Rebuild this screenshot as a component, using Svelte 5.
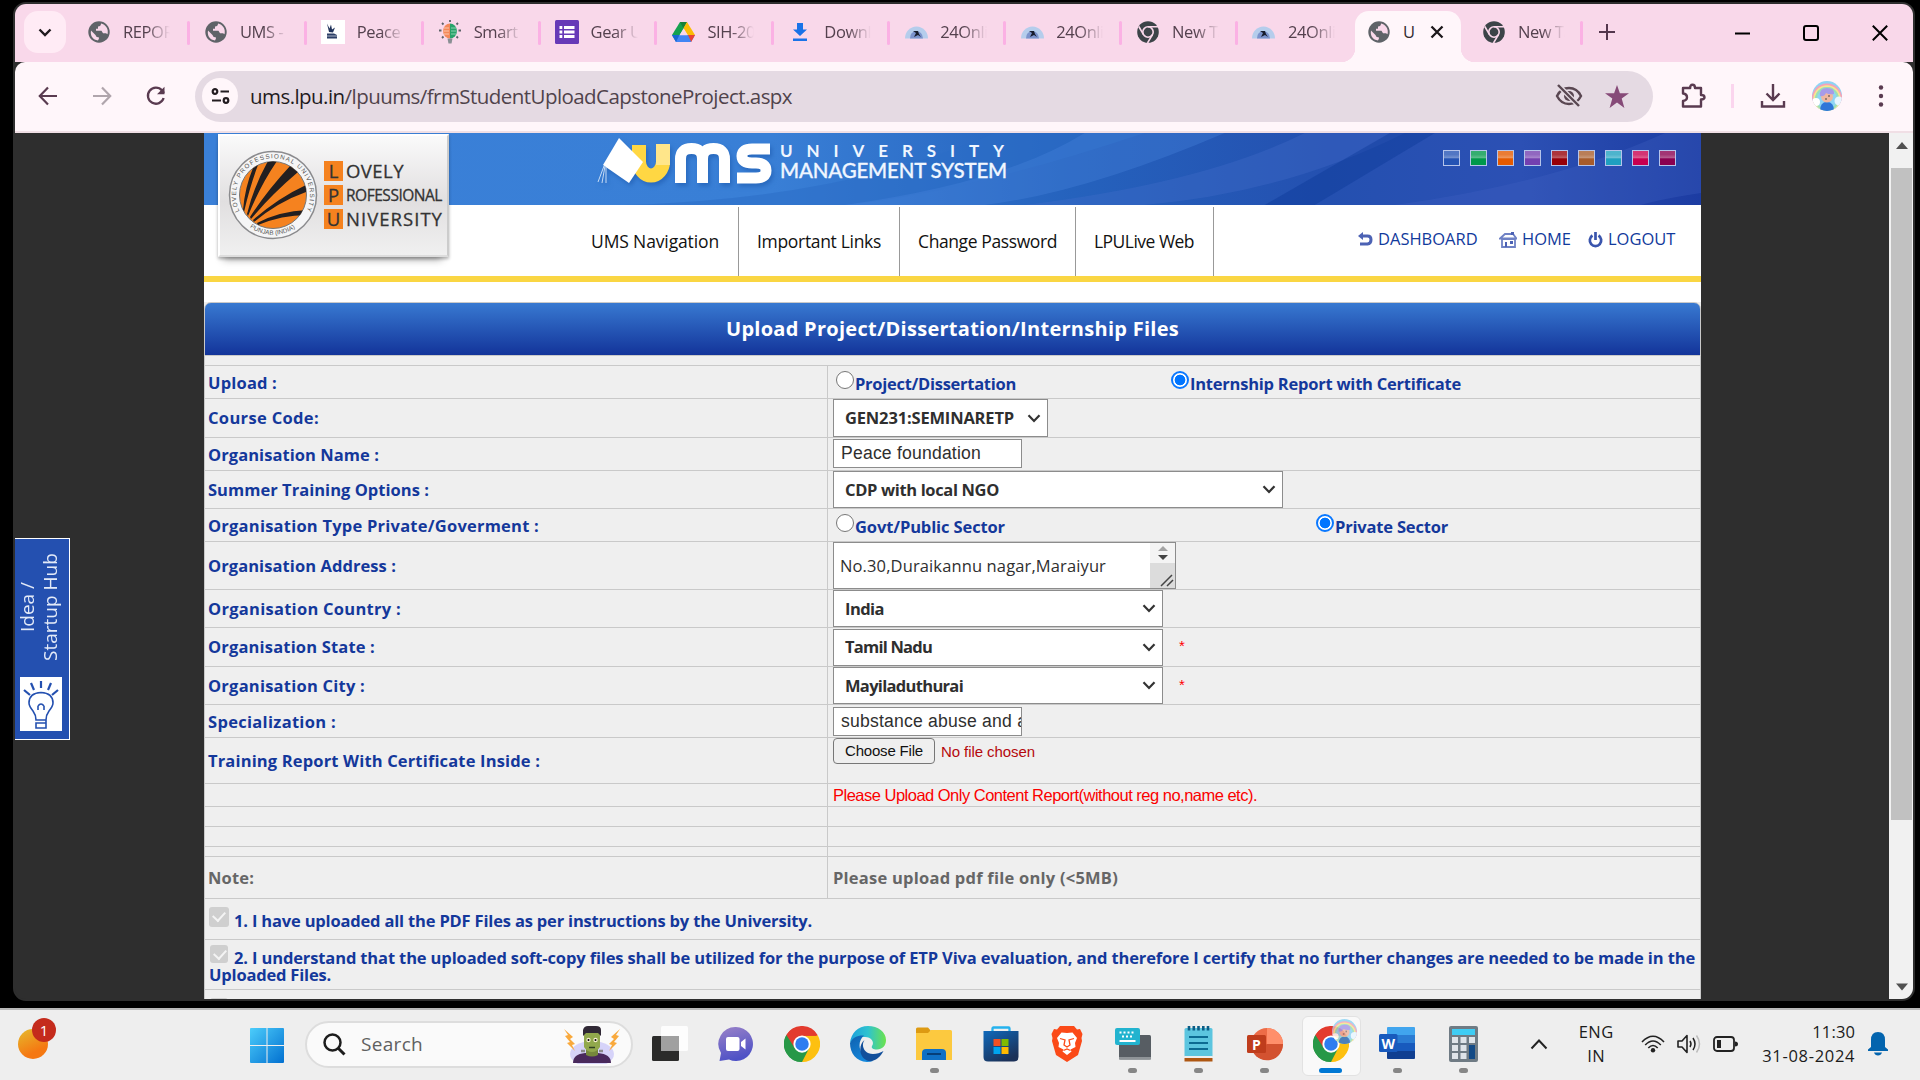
<script>
  const tabs = [
    ['globe', 'REPOR'], ['globe', 'UMS - L'], ['peace', 'Peace F'], ['smart', 'Smart I'],
    ['list', 'Gear Up'], ['drive', 'SIH-202'], ['down', 'Downlo'], ['dome', '24Onli'],
    ['dome', '24Onli'], ['chromeDark', 'New Ta'], ['dome', '24Onli']
  ];
  const nav = [['UMS Navigation', 128], ['Important Links', 124], ['Change Password', 139], ['LPULive Web', 100]];
  const swatches = ['#2453b4', '#00984a', '#e55a00', '#7440b0', '#970008', '#a75c2c', '#1fa0c0', '#c9004f', '#8a0050'];
  const apps = [
    ['taskview', 0], ['chat', 0], ['chrome', 0], ['edge', 0], ['folder', 1], ['store', 0], ['brave', 0],
    ['keyboard', 1], ['notepad', 1], ['ppt', 1], ['chromeUser', 2], ['word', 1], ['calc', 1]
  ];

  // Spreads a text line over a given width by adjusting its tracking.
  function fit(node, width) {
    requestAnimationFrame(() => {
      const natural = node.getBoundingClientRect().width;
      node.style.letterSpacing = (width - natural) / node.textContent.length + 'px';
    });
  }
</script>

{#snippet chevron()}
  <svg class="chev" width="14" height="9" viewBox="0 0 14 9"><path d="M1.500 1.200 7 7l5.500-5.800" fill="none" stroke="#333" stroke-width="2.200" /></svg>
{/snippet}

{#snippet select(text, w, cls)}
  <div class="select {cls}"><b class="tb" use:fit={w}>{text}</b>{@render chevron()}</div>
{/snippet}

{#snippet radio(on, text, w, cls)}
  <div class="radio {cls}"><i class:on></i><b class="tb blue" use:fit={w}>{text}</b></div>
{/snippet}

{#snippet chromeLogo(size)}
  <svg width={size} height={size} viewBox="0 0 48 48">
    <path d="M24 24 3.200 12A24 24 0 0 1 44.800 12z" fill="#e33b2e" />
    <path d="M24 24 44.800 12A24 24 0 0 1 24 48z" fill="#fdc010" />
    <path d="M24 24v24A24 24 0 0 1 3.200 12z" fill="#279847" />
    <path d="M24 13h20.300A24 24 0 0 1 24 48l9.500-18.500z" fill="#fdc010" />
    <path d="M3.200 12 14.500 29.500 24 35l9.500-5.500L24 48A24 24 0 0 1 3.200 12z" fill="#279847" />
    <path d="M3.200 12A24 24 0 0 1 44.300 13H24L14.500 29.500z" fill="#e33b2e" />
    <circle cx="24" cy="24" r="11.500" fill="#fff" /><circle cx="24" cy="24" r="9" fill="#2f7df0" />
  </svg>
{/snippet}

{#snippet avatar(size)}
  <svg width={size} height={size} viewBox="0 0 30 30">
    <defs><clipPath id="av{size}"><circle cx="15" cy="15" r="15" /></clipPath></defs>
    <g clip-path="url(#av{size})">
      <rect width="30" height="30" fill="#8fd4f4" />
      <g fill="none" stroke-width="1.800"><circle cx="15" cy="18" r="14.500" stroke="#f7a1b8" /><circle cx="15" cy="18" r="12.800" stroke="#fbe58a" /><circle cx="15" cy="18" r="11" stroke="#9be0b4" /></g>
      <circle cx="4" cy="21" r="4" fill="#fff" /><circle cx="27" cy="20" r="4.500" fill="#e8f6ff" />
      <path d="M8 30q0-9 7-9t7 9z" fill="#2f76d8" />
      <circle cx="15" cy="15.500" r="6" fill="#f0b7a0" />
      <path d="M8 15q-1-8 7-8t7 6q-5 1-8-1-2 4-6 3z" fill="#a79be8" />
      <path d="M17 14v2M13 18h2" stroke="#444" />
    </g>
  </svg>
{/snippet}

{#snippet favicon(kind)}
  {#if kind === 'globe'}
    <svg width="22" height="22" viewBox="0 0 22 22"><circle cx="11" cy="11" r="10.700" fill="#5f6368" /><path d="M3 9.500 7.500 14c.7.700 0 1.500 1.500 2l2 .5c0 1.500-.5 2-1 3C5 18.800 2 15 3 9.500zM13 2.500c0 2-1 3-3 3v2.200H8v2h5.500l1.500 2.500h3l1.500 1C21 8 17.500 3.500 13 2.500z" fill="#f9d8ea" /></svg>
  {:else if kind === 'peace'}
    <svg width="24" height="24" viewBox="0 0 24 24"><rect width="24" height="24" fill="#fff" /><path d="M6 3.500 8 12l4 .5 2-5-3 2-1-5-1.500 4z" fill="#22345c" /><path d="M6 13.500h7l3 1.500v3.500H6z" fill="#2c3e66" /><path d="M6 16h10" stroke="#cdd3df" stroke-width=".8" /></svg>
  {:else if kind === 'smart'}
    <svg width="22" height="24" viewBox="0 0 22 24"><path d="M11 3.500a7 7.500 0 0 0 0 15z" fill="#f4895a" /><path d="M11 3.500a7 7.500 0 0 1 0 15z" fill="#27a36a" /><path d="M5 8h5M4.500 11h5.500M5 14h5" stroke="#fbc5ac" /><path d="M12 8h5M12 11h5.500M12 14h5" stroke="#8bd1ae" /><path d="M8.500 18.500h5l-1 5h-3z" fill="#8a8f94" /><path d="M11 0v2M3 3l1.500 1.500M19 3l-1.500 1.500M0 10.500h2.500M19.500 10.500H22M3 18l1.500-1.500M19 18l-1.500-1.500" stroke="#5c6268" stroke-width="1.800" /></svg>
  {:else if kind === 'list'}
    <svg width="24" height="24" viewBox="0 0 24 24"><rect width="24" height="24" rx="1.500" fill="#673ab7" /><path d="M4.500 7.500h2.800M4.500 12h2.800M4.500 16.500h2.800M9 7.500h10.500M9 12h10.500M9 16.500h10.500" stroke="#fff" stroke-width="2.800" /></svg>
  {:else if kind === 'drive'}
    <svg width="23" height="20" viewBox="0 0 23 20"><path d="M8 0h7l-3.500 6.500L4 19.500 0 13z" fill="#16a150" /><path d="M8 0h7l-3.500 6.500z" fill="#188038" /><path d="M15 0l8 13h-7.200L11.500 6z" fill="#fbbc04" /><path d="M0 13h23l-4 7H4z" fill="#4285f4" /><path d="M16 13h7l-3.800 7z" fill="#ea4335" /><path d="M0 13h7.500L4 20z" fill="#1967d2" /><path d="m11.500 7 4 6.200h-8z" fill="#f9d8ea" /></svg>
  {:else if kind === 'down'}
    <svg width="16" height="18" viewBox="0 0 16 18"><path d="M5 0h6v6.500h4L8 13 1 6.500h4zM1 15.500h14V18H1z" fill="#1a73e8" /></svg>
  {:else if kind === 'dome'}
    <svg width="23" height="13" viewBox="0 0 23 13"><path d="M0 12.500a11.500 12 0 0 1 23 0z" fill="#b5cdec" /><path d="M5 12.500q0-7 6.500-7.500 6 .5 6.500 7.500z" fill="#7b93cc" /><path d="M8 5h5l1 3 2 3-3-2-4 2 2-4z" fill="#171c2c" /></svg>
  {:else}
    <svg width="22" height="22" viewBox="0 0 22 22"><circle cx="11" cy="11" r="10.800" fill="#3c4448" /><g stroke="#f9d8ea" stroke-width="1.600" fill="none"><circle cx="11" cy="11" r="5.200" /><path d="M11 5.800h10M6.500 13.600 1.800 5.500M15.500 13.600 10.500 22" /></g></svg>
  {/if}
{/snippet}

{#snippet app(kind)}
  {#if kind === 'taskview'}
    <svg width="36" height="36" viewBox="0 0 36 36"><rect x="0" y="10" width="27" height="25" rx="1.500" fill="#2b2b2a" /><rect x="9" y="0" width="27" height="25" rx="1.500" fill="#fff" opacity=".85" /><path d="M9 10h18v15H9z" fill="#a0a0a0" /></svg>
  {:else if kind === 'chat'}
    <svg width="36" height="36" viewBox="0 0 36 36"><defs><linearGradient id="cg" x2=".3" y2="1"><stop stop-color="#9a82c8" /><stop offset="1" stop-color="#4f52c6" /></linearGradient></defs><path d="M18 1a17 17 0 1 1-7 32.500L1.500 35l1.500-8A17 17 0 0 1 18 1z" fill="url(#cg)" /><rect x="8" y="11" width="13.500" height="14" rx="2" fill="#fff" /><path d="M23 16l4.500-3.500v11L23 20z" fill="#fff" /></svg>
  {:else if kind === 'chrome'}
    {@render chromeLogo(36)}
  {:else if kind === 'edge'}
    <svg width="36" height="36" viewBox="0 0 36 36"><defs><linearGradient id="e1"><stop stop-color="#1a9fdc" /><stop offset=".5" stop-color="#2fc3cf" /><stop offset="1" stop-color="#6be34c" /></linearGradient><linearGradient id="e2" x2=".6" y2="1"><stop stop-color="#0e5fae" /><stop offset="1" stop-color="#1589dc" /></linearGradient></defs>
      <path d="M0 17C1 7 8 0 18 0c10 0 18 6 18 14 0 6-4 9.500-9 9.500-4 0-6-1.500-5-3.500 3-4-1-9-7-9S3 13 0 17z" fill="url(#e1)" />
      <path d="M0 17c3-6 8-8 14-7.500C9 14 8 21 12 27c3 4.500 7 6.500 11 8C9 39 0 29 0 17z" fill="url(#e2)" />
      <path d="M14.500 14c-4 6 0 14 8.500 14 4 0 7-1 10.500-3C30 32 23 37 17 34.500 8 30 9 18 14.500 14z" fill="#124f9b" /></svg>
  {:else if kind === 'folder'}
    <svg width="36" height="36" viewBox="0 0 36 36"><path d="M0 3q0-1.500 1.500-1.500H12L15 5v6H0z" fill="#dd9a12" /><path d="M0 7h12l3-3h19.500Q36 4 36 5.500V34H0z" fill="#fcc93f" /><path d="M6 34v-7q0-4 4-4h16q4 0 4 4v7z" fill="#0f70c4" /><path d="M11 28h14" stroke="#063f78" stroke-width="2" /></svg>
  {:else if kind === 'store'}
    <svg width="36" height="36" viewBox="0 0 36 36"><defs><linearGradient id="st" x2=".6" y2="1"><stop stop-color="#0f69bb" /><stop offset="1" stop-color="#1b3158" /></linearGradient></defs><path d="M9.500 8V2.500q0-1 1-1h15q1 0 1 1V8" fill="none" stroke="#25b2ee" stroke-width="2.300" /><path d="M.5 5h35v26q0 4.500-4.500 4.500H5Q.5 35.500.5 31z" fill="url(#st)" /><path d="M10.500 13H17.500v7h-7z" fill="#f25022" /><path d="M18.500 13h7v7h-7z" fill="#7fba00" /><path d="M10.500 21h7v7h-7z" fill="#00a4ef" /><path d="M18.500 21h7v7h-7z" fill="#ffb900" /></svg>
  {:else if kind === 'brave'}
    <svg width="32" height="36" viewBox="0 0 32 36"><path d="M9 0h14l3 3.500 3-.5 2.500 5-1 4 .5 3-4 14L16 36 5 29 1 15l.5-3-1-4L3 3l3 .5z" fill="#fb4a18" /><path d="M16 7l5.500-.5 4.500 5.500-2 5 .5 4-5 2.500 1 2L16 29l-4.500-3.500 1-2-5-2.500.5-4-2-5 4.500-5.500z" fill="#fff" /><path d="M9 12.500l5 1.500-1 5 3 2 3-2-1-5 5-1.500M12.500 24.500l3.500-1.500 3.500 1.500" fill="none" stroke="#fb4a18" stroke-width="1.300" /></svg>
  {:else if kind === 'keyboard'}
    <svg width="36" height="36" viewBox="0 0 36 36"><rect x="4" y="9" width="32" height="24.500" rx="1.500" fill="#575d63" /><path d="M4 31h32v2.500H4z" fill="#8f9498" /><rect y="2" width="25" height="17" rx="2" fill="#22b3cf" /><path d="M4.500 6.500h16M7 10.500h12" stroke="#fff" stroke-width="2" stroke-dasharray="2 2" /><path d="M4.500 15h16" stroke="#fff" stroke-width="2" /></svg>
  {:else if kind === 'notepad'}
    <svg width="29" height="36" viewBox="0 0 29 36"><rect x=".5" y="2" width="28" height="29" rx="1.500" fill="#5cc5df" /><path d="M.5 30h28v2H.5z" fill="#eee" /><path d="M.5 32h28v3.500H.5z" fill="#ae5712" /><path d="M5 0v4.500M9.800 0v4.500M14.500 0v4.500M19.300 0v4.500M24 0v4.500" stroke="#0b5d86" stroke-width="2.600" /><path d="M5 11h19M5 17h19M5 23h19" stroke="#0c6a92" stroke-width="2" /></svg>
  {:else if kind === 'ppt'}
    <svg width="36" height="36" viewBox="0 0 36 36"><circle cx="20" cy="18" r="16" fill="#ed6c47" /><path d="M20 2a16 16 0 0 1 16 16H20z" fill="#ff8f6b" /><path d="M20 18h16a16 16 0 0 1-30 8z" fill="#d35230" /><rect y="9" width="19" height="18" rx="1.500" fill="#bf3d1c" /><text x="9.500" y="23.500" text-anchor="middle" class="mark">P</text></svg>
  {:else if kind === 'chromeUser'}
    {@render chromeLogo(36)}<span class="badge">{@render avatar(25)}</span>
  {:else if kind === 'word'}
    <svg width="36" height="36" viewBox="0 0 36 36"><path d="M8 2q0-1 1-1h26q1 0 1 1v7H8z" fill="#41a5ee" /><path d="M8 9h28v8H8z" fill="#2b7cd3" /><path d="M8 17h28v8H8z" fill="#185abd" /><path d="M8 25h28v7q0 1-1 1H9q-1 0-1-1z" fill="#103f91" /><rect y="8" width="18.500" height="18" rx="1.500" fill="#185abd" /><text x="9.200" y="22.500" text-anchor="middle" class="mark">W</text></svg>
  {:else}
    <svg width="29" height="36" viewBox="0 0 29 36"><rect width="29" height="36" rx="2" fill="#6f7b84" /><rect x="3" y="3" width="23" height="6" fill="#3fcdf4" /><g fill="#dfe4e9"><path d="M3 11h6v6H3zM11.500 11h6v6h-6zM20 11h6v6h-6zM3 19h6v6H3zM11.500 19h6v6h-6zM3 27h6v6H3zM11.500 27h6v6h-6z" /></g><path d="M20 19h6v14h-6z" fill="#134a86" /></svg>
  {/if}
{/snippet}

<div class="screen">
  <div class="window">
    <div class="tabbar">
      <div class="search-tabs"><svg width="14" height="9" viewBox="0 0 14 9"><path d="M1.500 1.500 7 7l5.500-5.500" fill="none" stroke="#201a1e" stroke-width="2.400" /></svg></div>
      {#each tabs as [icon, label], i}
        <div class="tab" class:wide={i < 6} class:nosep={i === 10}><span class="fav">{@render favicon(icon)}</span><span class="tabtext">{label}</span></div>
      {/each}
      <div class="tab active"><span class="fav">{@render favicon('globe')}</span><span class="u">U</span>
        <svg width="14" height="14" viewBox="0 0 14 14"><path d="M1.500 1.500l11 11M12.500 1.500l-11 11" stroke="#1c171a" stroke-width="2.300" /></svg></div>
      <div class="tab last"><span class="fav">{@render favicon('chromeDark')}</span><span class="tabtext">New Ta</span></div>
      <svg class="plus" width="16" height="16" viewBox="0 0 16 16"><path d="M8 0v16M0 8h16" stroke="#54364d" stroke-width="2" /></svg>
      <div class="winctl">
        <svg width="16" height="16" viewBox="0 0 16 16"><path d="M0 8.500h15" stroke="#000" stroke-width="2" /></svg>
        <svg width="16" height="16" viewBox="0 0 16 16"><rect x="1" y="1" width="14" height="14" rx="2" fill="none" stroke="#000" stroke-width="2" /></svg>
        <svg width="16" height="16" viewBox="0 0 16 16"><path d="M.8.8l14.400 14.400M15.200.8.800 15.200" stroke="#000" stroke-width="2" /></svg>
      </div>
    </div>
    <div class="toolbar">
      <svg class="tool" viewBox="0 0 20 20"><path d="M19 10H2.500M10 1.500 1.800 10l8.200 8.500" fill="none" stroke="#5a3b50" stroke-width="2.200" /></svg>
      <svg class="tool" viewBox="0 0 20 20"><path d="M1 10h16.500M10 1.500l8.200 8.500L10 18.500" fill="none" stroke="#b0a5ac" stroke-width="2.200" /></svg>
      <svg class="tool" viewBox="0 0 20 20"><path d="M17.600 12A8 8 0 1 1 16 4.500L18 7" fill="none" stroke="#5a3b50" stroke-width="2.300" /><path d="M18.500.8v7.500H11z" fill="#5a3b50" /></svg>
      <div class="omnibox">
        <div class="site"><svg width="19" height="16" viewBox="0 0 19 16"><g fill="none" stroke="#231c20" stroke-width="2.200"><circle cx="4" cy="3.500" r="2.300" /><path d="M9.500 3.500h8.500M1 12.500h9" /><circle cx="15" cy="12.500" r="2.300" /></g></svg></div>
        <span class="url" use:fit={542}><span>ums.lpu.in</span>/lpuums/frmStudentUploadCapstoneProject.aspx</span>
        <svg class="eye" width="28" height="24" viewBox="0 0 28 24"><path d="M2 12Q6 4 14 4t12 8q-4 8-12 8T2 12z" fill="none" stroke="#5a4752" stroke-width="2.400" /><circle cx="14" cy="12" r="5" fill="#5a4752" /><path d="M3 1l21 21" stroke="#e5dbe3" stroke-width="5" /><path d="M3 1l21 21" stroke="#5a4752" stroke-width="2.400" /></svg>
        <svg width="24" height="23" viewBox="0 0 24 23"><path d="m12 0 2.900 8.300H24l-7.300 5.300L19.400 23 12 17.400 4.600 23l2.700-9.400L0 8.300h9.100z" fill="#864a78" /></svg>
      </div>
      <div class="actions">
        <svg width="26" height="26" viewBox="0 0 26 26"><path d="M2 5h7.200Q9 1.800 11.500 1.800T14 5h6v7q3.500 0 3.500 2.200T20 16.500V23.500H2v-5.500q4-.5 4-3.700T2 10.500z" fill="none" stroke="#5a3b50" stroke-width="2.400" stroke-linejoin="round" /></svg>
        <span class="vsep"></span>
        <svg width="26" height="26" viewBox="0 0 26 26"><path d="M13 1v16M6.500 10.500 13 17l6.500-6.500M2 18v5.500h22V18" fill="none" stroke="#5a3b50" stroke-width="2.400" /></svg>
        <span class="profile">{@render avatar(30)}</span>
        <svg width="6" height="22" viewBox="0 0 6 22"><g fill="#5a3b50"><circle cx="3" cy="2.500" r="2.200" /><circle cx="3" cy="11" r="2.200" /><circle cx="3" cy="19.500" r="2.200" /></g></svg>
      </div>
    </div>

    <div class="viewport">
      <div class="page">
        <header>
          <div class="banner">
            <svg class="waves" width="1497" height="72" viewBox="0 0 1496 72" preserveAspectRatio="none">
              <path d="M420 72Q640 66 790 0h150Q760 60 640 72z" fill="#2b6dc6" opacity=".55" />
              <path d="M640 72Q800 50 880 0h140Q880 60 780 72z" fill="#4784dc" opacity=".35" />
              <path d="M820 72Q1000 50 1100 0h100q-120 60-260 72z" fill="#4a70cc" opacity=".3" />
              <path d="M1060 72l125-72h45L1110 72z" fill="#0b3795" opacity=".4" />
              <path d="M1190 72q160-22 270-72h36v60q-40 6-60 12z" fill="#4263c4" opacity=".3" />
            </svg>
            <div class="ums">
              <svg width="176" height="52" viewBox="0 0 176 52">
                <path d="M43 10v16.500a12 14 0 0 0 24 0V9" fill="none" stroke="#ffd743" stroke-width="14" />
                <path d="M60 9h14v21H60z" fill="#ffe68a" />
                <path d="M23 3 47 27 33 48 7 30z" fill="#fff" /><path d="M8 31 2 47M9 31 6 48M10 32v16" stroke="#c8dcf5" />
                <path d="M84.500 48V24q0-10.500 11-10.500t11 10.500v24M106.500 24q0-10.500 11-10.500t11 10.500v24" fill="none" stroke="#fff" stroke-width="11" />
                <path d="M174 14h-18q-10 0-10 7t10 7h4q10 0 10 7.500t-10 7.500h-19" fill="none" stroke="#fff" stroke-width="11" />
              </svg>
              <div class="umstext"><span class="l1" use:fit={238}>UNIVERSITY</span><span class="l2" use:fit={227}>MANAGEMENT SYSTEM</span></div>
            </div>
            <div class="swatches">{#each swatches as c}<i style:background-color={c}></i>{/each}</div>
          </div>
          <div class="menu">
            <nav>{#each nav as [t, w]}<span class="item"><span use:fit={w}>{t}</span></span>{/each}</nav>
            <div class="links">
              <svg width="15" height="15" viewBox="0 0 15 15"><path d="M4 4h5.500q3.500 0 3.500 3.800T9.500 12H2" fill="none" stroke="#4c62b4" stroke-width="3" /><path d="M0 4 5 0v8z" fill="#4c62b4" /></svg>
              <span class="d" use:fit={100}>DASHBOARD</span>
              <svg width="18" height="16" viewBox="0 0 18 16"><path d="M1 6.500 6 2h8l3.500 4.500zM3 7h13v8H3z" fill="none" stroke="#6f82c5" stroke-width="1.800" /><path d="M6 10h2v5H6zM11 9h3v3h-3zM12 0h3v3h-3z" fill="#4c62b4" /></svg>
              <span class="h" use:fit={47}>HOME</span>
              <svg width="15" height="16" viewBox="0 0 15 16"><path d="M4.500 3.500a5.700 5.700 0 1 0 6 0M7.500 0v8" fill="none" stroke="#3a55ad" stroke-width="2.700" /></svg>
              <span class="o" use:fit={65}>LOGOUT</span>
            </div>
          </div>
          <div class="lpu">
            <svg width="90" height="90" viewBox="0 0 90 90">
              <defs>
                <clipPath id="ball"><circle cx="45" cy="45" r="33.500" /></clipPath>
                <path id="arcTop" d="M12 62A37 37 0 1 1 78 62" /><path id="arcBot" d="M19.500 75.500A39.700 39.700 0 0 0 70.500 75.500" />
              </defs>
              <circle cx="45" cy="45" r="43.500" fill="#f5f5f6" stroke="#8b8b8e" stroke-width="1.500" />
              <circle cx="45" cy="45" r="33.500" fill="#f5821f" stroke="#777" />
              <g clip-path="url(#ball)" fill="#231f20">
                <path d="M15 60Q17 37 25 18l5-3Q22 36 16 62zM19 64Q26 36 40 11h9Q32 36 20 66zM22 67Q38 42 62 16l8 6Q43 45 23 69zM25 70Q50 48 78 35v7Q50 52 26 72zM29 73Q52 61 80 60v5Q54 65 30 75z" />
              </g>
              <text class="seal"><textPath href="#arcTop" textLength="148" startOffset="1">LOVELY PROFESSIONAL UNIVERSITY</textPath></text>
              <text class="seal"><textPath href="#arcBot" textLength="48" startOffset="3">PUNJAB (INDIA)</textPath></text>
            </svg>
            <div class="lputext">
              <div><i>L</i><span use:fit={58}>OVELY</span></div>
              <div><i>P</i><span class="mid" use:fit={96}>ROFESSIONAL</span></div>
              <div><i>U</i><span use:fit={97}>NIVERSITY</span></div>
            </div>
          </div>
        </header>

        <h1><span use:fit={453}>Upload Project/Dissertation/Internship Files</span></h1>

        <div class="grid">
          <div class="row r33"><div class="lab"><b class="tb" use:fit={69}>Upload :</b></div><div class="val">{@render radio(false, 'Project/Dissertation', 161, 'g1')}{@render radio(true, 'Internship Report with Certificate', 271, '')}</div></div>
          <div class="row r39"><div class="lab"><b class="tb" use:fit={111}>Course Code:</b></div><div class="val">{@render select('GEN231:SEMINARETP', 169, 'w215')}</div></div>
          <div class="row r33"><div class="lab"><b class="tb" use:fit={171}>Organisation Name :</b></div><div class="val"><div class="input"><span use:fit={140}>Peace foundation</span></div></div></div>
          <div class="row r38"><div class="lab"><b class="tb" use:fit={221}>Summer Training Options :</b></div><div class="val">{@render select('CDP with local NGO', 154, 'w450')}</div></div>
          <div class="row r33"><div class="lab"><b class="tb" use:fit={331}>Organisation Type Private/Goverment :</b></div><div class="val">{@render radio(false, 'Govt/Public Sector', 150, 'g2')}{@render radio(true, 'Private Sector', 113, '')}</div></div>
          <div class="row r48"><div class="lab"><b class="tb" use:fit={188}>Organisation Address :</b></div><div class="val">
            <div class="area"><span class="areatext" use:fit={266}>No.30,Duraikannu nagar,Maraiyur</span>
              <svg width="25" height="45" viewBox="0 0 25 45"><path d="M0 0h25v45H0z" fill="#dcdcdc" /><path d="M0 0h25v20H0z" fill="#f4f4f4" /><path d="m13 3 5 5H8z" fill="#a3a3a3" /><path d="m13 17 5-5H8z" fill="#444" /><path d="M11 43 22 32M17 43l6-6" stroke="#444" stroke-width="1.500" /></svg></div></div></div>
          <div class="row r38"><div class="lab"><b class="tb" use:fit={193}>Organisation Country :</b></div><div class="val">{@render select('India', 39, 'w330')}</div></div>
          <div class="row r39"><div class="lab"><b class="tb" use:fit={167}>Organisation State :</b></div><div class="val">{@render select('Tamil Nadu', 87, 'w330')}<em>*</em></div></div>
          <div class="row r38"><div class="lab"><b class="tb" use:fit={157}>Organisation City :</b></div><div class="val">{@render select('Mayiladuthurai', 118, 'w330')}<em>*</em></div></div>
          <div class="row r33"><div class="lab"><b class="tb" use:fit={128}>Specialization :</b></div><div class="val"><div class="input spec"><span>substance abuse and addiction</span></div></div></div>
          <div class="row r46"><div class="lab"><b class="tb" use:fit={332}>Training Report With Certificate Inside :</b></div><div class="val top"><span class="file"><span use:fit={78}>Choose File</span></span><span class="nofile" use:fit={94}>No file chosen</span></div></div>
          <div class="row r23"><div class="lab"></div><div class="val"><span class="warn" use:fit={424}>Please Upload Only Content Report(without reg no,name etc).</span></div></div>
          <div class="row r20"><div class="lab"></div><div class="val"></div></div>
          <div class="row r20"><div class="lab"></div><div class="val"></div></div>
          <div class="row r10"><div class="lab"></div><div class="val"></div></div>
          <div class="row r42 grey"><div class="lab"><b class="tb" use:fit={46}>Note:</b></div><div class="val"><b class="tb" use:fit={285}>Please upload pdf file only (&lt;5MB)</b></div></div>
          <div class="row r41 terms"><i class="check big"></i><b class="tb" use:fit={578}>1. I have uploaded all the PDF Files as per instructions by the University.</b></div>
          <div class="row r50 terms two"><div class="line"><i class="check"></i><b class="tb" use:fit={1461}>2. I understand that the uploaded soft-copy files shall be utilized for the purpose of ETP Viva evaluation, and therefore I certify that no further changes are needed to be made in the</b></div><b class="tb" use:fit={122}>Uploaded Files.</b></div>
          <div class="row r41 terms next"><i class="check"></i></div>
        </div>
      </div>

      <div class="scroll">
        <svg width="14" height="8" viewBox="0 0 14 8"><path d="M7 0l6 7H1z" fill="#505050" /></svg>
        <div class="thumb"></div>
        <svg width="14" height="8" viewBox="0 0 14 8"><path d="M7 7.500 13 .5H1z" fill="#505050" /></svg>
      </div>

      <div class="idea">
        <div class="ideatext"><span>Idea /</span><br /><span>Startup Hub</span></div>
        <svg width="42" height="54" viewBox="0 0 42 54"><path d="M0 0h42v54H0z" fill="#fff" /><g fill="none" stroke="#2450b0" stroke-width="1.600"><path d="M16 43q0-5-3-9-4-5-4-8 0-10 12-10.500Q33 16 33 26q0 3-4 8-3 4-3 9zM16 46h10v5H16zM16 43h10v3M18 29q3-4 6 0M18 29v4M24 29v4" /><path d="M21 4v7M11 6l3 7M31 6l-3 7M4 13l6 5M38 13l-6 5" stroke-width="2.200" /></g></svg>
      </div>
    </div>
  </div>

  <div class="taskbar">
    <div class="weather"><i></i><span>1</span></div>
    <svg class="start" width="34" height="35" viewBox="0 0 34 35"><defs><linearGradient id="win" x2="1" y2="1"><stop stop-color="#4ccdfb" /><stop offset="1" stop-color="#0270d0" /></linearGradient></defs><path d="M0 1q0-1 1-1h15.500v17H0zM17.500 0H33q1 0 1 1v16H17.500zM0 18h16.500v17H1q-1 0-1-1zM17.500 18H34v16q0 1-1 1H17.500z" fill="url(#win)" /></svg>
    <div class="search">
      <svg width="23" height="23" viewBox="0 0 23 23"><circle cx="9.500" cy="9.500" r="8" fill="none" stroke="#1d1d1d" stroke-width="2.500" /><path d="m15 15 6.500 6.500" stroke="#1d1d1d" stroke-width="3" /></svg>
      <span use:fit={62}>Search</span>
      <svg width="58" height="38" viewBox="0 0 58 38">
        <ellipse cx="29" cy="28" rx="22" ry="13" fill="#c9c5f8" opacity=".75" />
        <path d="m1 3 9 8-3 2 5 5-3 1 3 6-8-8 3-1-5-6 3-1zM57 3l-9 8 3 2-5 5 3 1-3 6 8-8-3-1 5-6-3-1z" fill="#f9a93c" />
        <path d="M10 37q0-9 12-10h13q13 1 13 10z" fill="#49295c" /><path d="M23 22h12v7q-6 3-12 0z" fill="#76883c" />
        <path d="M21 6h16v15q-3 5-8 5t-8-5z" fill="#91a84c" /><path d="M20 10V4q1-4 5-4h8q5 0 5 4v6l-3-3H23z" fill="#302835" />
        <circle cx="25.500" cy="14" r="2.200" fill="#f6f0d0" /><circle cx="32.500" cy="14" r="2.200" fill="#f6f0d0" /><circle cx="25.500" cy="14" r="1" /><circle cx="32.500" cy="14" r="1" /><path d="M26 21.500h6" stroke="#304024" stroke-width="1.500" /><path d="M18 25h4M36 25h4" stroke="#8a8a8a" stroke-width="2.500" />
      </svg>
    </div>
    <div class="apps">
      {#each apps as [kind, state]}
        <div class="app" class:open={state === 1} class:focus={state === 2}>{@render app(kind)}</div>
      {/each}
    </div>
    <div class="tray">
      <svg class="up" width="18" height="12" viewBox="0 0 18 12"><path d="m1.500 10.500 7.500-8 7.500 8" fill="none" stroke="#222" stroke-width="2" /></svg>
      <div class="lang"><span use:fit={35}>ENG</span><span use:fit={18}>IN</span></div>
      <svg class="wifi" width="24" height="18" viewBox="0 0 24 18"><g fill="none" stroke="#222" stroke-width="1.600"><path d="M1 7Q12-4.500 23 7M4.200 10Q12 2 19.800 10M7.300 13Q12 8 16.700 13" /></g><circle cx="12" cy="15.300" r="2.200" fill="#222" /></svg>
      <svg class="vol" width="24" height="20" viewBox="0 0 24 20"><path d="M1 7h4l5-5.500v17L5 13H1z" fill="none" stroke="#222" stroke-width="1.600" stroke-linejoin="round" /><path d="M13 7q2 3 0 6M16 4q4 6 0 12" fill="none" stroke="#222" stroke-width="1.500" /><path d="M19.500 1.500q6 8.500 0 17" fill="none" stroke="#bbb" stroke-width="1.500" /></svg>
      <svg class="bat" width="25" height="16" viewBox="0 0 25 16"><rect x="1" y="1" width="20" height="14" rx="3" fill="none" stroke="#222" stroke-width="1.800" /><path d="M4 4h4v8H4z" fill="#222" /><path d="M22 5.500q3 0 3 2.500t-3 2.500z" fill="#222" /></svg>
      <div class="clock"><span use:fit={43}>11:30</span><span use:fit={93}>31-08-2024</span></div>
      <svg class="bell" width="20" height="24" viewBox="0 0 20 24"><path d="M3 15V8q0-8 7-8t7 8v7l3 2.500V19H0v-1.500zM6 20.500h8q-1 3-4 3t-4-3z" fill="#0364ae" /></svg>
    </div>
  </div>
</div>

<style>
  :global(body) { margin: 0; background: #000; overflow: hidden; }
  .screen { width: 1920px; height: 1080px; background: #000; display: flex; flex-direction: column; font-family: "Open Sans", "Noto Sans", sans-serif; box-sizing: border-box; padding-top: 2px; overflow: hidden; }
  .screen :global(*) { box-sizing: border-box; }
  svg { display: block; flex: none; }
  [class] > span, .tb { white-space: nowrap; }
  .window { width: 1902px; height: 999px; margin: 0 0 7px 13px; flex: none; background: #2e2e2e; border: 2px solid #2e2e2e; border-radius: 13px; overflow: hidden; display: flex; flex-direction: column; }
  .tabbar { height: 58px; flex: none; background: #f9d8ea; display: flex; align-items: flex-start; padding: 7px 0 0 9px; }
  .search-tabs { width: 42px; height: 42px; border-radius: 14px; background: #ffebf5; display: flex; align-items: center; justify-content: center; margin-right: 7px; flex: none; }
  .tab { width: 115.900px; height: 51px; padding: 0 0 9px 13px; display: flex; align-items: center; position: relative; flex: none; }
  .tab.wide { width: 116.900px; }
  .tab::after { content: ''; position: absolute; right: 0; top: 10px; width: 3px; height: 24px; border-radius: 2px; background: #fbb1e4; }
  .tab.nosep { width: 117px; }
  .tab.nosep::after, .tab.active::after { display: none; }
  .fav { width: 26px; display: flex; justify-content: center; margin-right: 11px; flex: none; }
  .tabtext { width: 47px; overflow: hidden; font-size: 16.500px; line-height: 24px; color: #54414e; letter-spacing: -.4px; margin-top: -1px; -webkit-mask-image: linear-gradient(90deg, #000 50%, transparent 100%); mask-image: linear-gradient(90deg, #000 50%, transparent 100%); }
  .tab.active { width: 106px; padding-left: 11px; background: #fff6fa; border-radius: 14px 14px 0 0; color: #332b30; }
  .tab.active::before { content: ''; position: absolute; left: -14px; right: -14px; bottom: 0; height: 14px; background: radial-gradient(circle at 0 0, transparent 14px, #fff6fa 14.500px) left / 14px 14px no-repeat, radial-gradient(circle at 14px 0, transparent 14px, #fff6fa 14.500px) right / 14px 14px no-repeat; }
  .u { width: 14px; font-size: 16.500px; margin: -1px 13px 0 0; }
  .tab.last { width: 122px; padding-left: 20px; }
  .plus { margin: 13px 0 0 16px; }
  .winctl { display: flex; gap: 52.500px; margin: 14px 0 0 120px; }
  .toolbar { height: 71px; flex: none; background: #fff6fa; border-bottom: 2px solid #f0dfe5; border-radius: 10px 10px 0 0; display: flex; align-items: center; padding: 0 0 1px 23px; }
  .tool { width: 20px; height: 20px; margin-right: 34px; }
  .tool:nth-of-type(3) { margin-right: 29px; }
  .omnibox { width: 1458px; height: 51px; border-radius: 26px; background: #e5dae3; display: flex; align-items: center; padding: 0 24px 0 7px; flex: none; }
  .site { width: 36px; height: 36px; border-radius: 50%; background: #fff6fa; display: flex; align-items: center; justify-content: center; margin-right: 12px; }
  .url { font-size: 20.500px; line-height: 28px; color: #50434b; white-space: nowrap; }
  .url span { color: #1f1a1d; }
  .eye { margin: 0 22px 0 auto; }
  .actions { display: flex; align-items: center; padding-left: 28px; }
  .vsep { width: 3px; height: 24px; background: #fbd5ee; margin: 0 26px 0 24px; }
  .profile { margin: 0 36px 0 26px; }
  .viewport { height: 866px; flex: none; background: #2e2e2e; position: relative; display: flex; padding-left: 189px; }
  .page { width: 1497px; height: 866px; background: #efefef; overflow: hidden; flex: none; }
  header { position: relative; height: 169px; background: #fff; }
  .banner { position: relative; height: 72px; background: linear-gradient(90deg, #3a80d8 0%, #397fd6 38%, #2562bd 58%, #2450b0 75%, #2c50b4 88%, #1c3ca2 100%); display: flex; }
  .waves { position: absolute; left: 0; top: 0; }
  .ums { position: relative; display: flex; margin-left: 392px; }
  .ums svg { margin-top: 2px; filter: drop-shadow(2px 3px 2px #1b56a888); }
  .umstext { width: 400px; padding: 8px 0 0 8px; display: flex; flex-direction: column; align-items: flex-start; color: #f0f6ff; font-family: Lato, sans-serif; }
  .l1 { font-size: 17px; line-height: 20px; font-weight: 700; }
  .l2 { font-size: 20.500px; line-height: 18px; font-weight: 500; -webkit-text-stroke: .3px #f0f6ff; }
  .swatches { position: relative; display: flex; gap: 10px; padding-top: 17px; margin-left: 271px; }
  .swatches i { width: 17px; height: 16px; border: 1px solid #b5c4ea; background-image: linear-gradient(#ffffff35 0 25%, #ffffff60 50%, transparent 55%); }
  .menu { height: 77px; border-bottom: 6px solid #fad643; display: flex; padding: 2px 0 0 369px; }
  nav { display: flex; width: 760px; }
  .item { height: 69px; border-right: 1px solid #999; padding: 0 18px 2px 18px; display: flex; align-items: center; font-size: 17.500px; line-height: 24px; color: #111; white-space: nowrap; }
  .item:first-child { padding-left: 18px; padding-right: 19px; }
  .item:last-child { padding-right: 19px; }
  .item > span { white-space: nowrap; }
  .links { display: flex; align-items: flex-start; padding-top: 26px; margin-left: 25px; color: #123a9c; font-size: 16.500px; }
  .links svg { margin-top: -1px; }
  .links span { line-height: 16px; margin-left: 5px; margin-top: -2px; }
  .d { width: 100px; margin-right: 21px; } .h { width: 47px; margin-right: 19px; } .o { width: 65px; }
  .lpu { position: absolute; left: 14px; top: 1px; width: 231px; height: 123px; border: 2px solid #fff; border-bottom-color: #ddd; border-right-color: #ccc; background: linear-gradient(#fafafa, #e1dfe0 55%, #f0f0f0); box-shadow: 0 2px 3px #0004, -1px 8px 8px -6px #0006; display: flex; padding: 14px 0 0 8px; }
  .lputext { display: flex; flex-direction: column; gap: 4px; padding: 11px 0 0 6px; }
  .lputext div { display: flex; height: 20px; align-items: center; font-size: 18.500px; line-height: 20px; color: #333; -webkit-text-stroke: .3px #333; }
  .lputext i { width: 19px; height: 20px; background: #f5821f; font-style: normal; text-align: center; margin-right: 3px; }
  .lputext span { white-space: nowrap; }
  .lputext .mid { font-size: 15.500px; }
  .seal { font: 6.300px "Liberation Sans", sans-serif; fill: #555; }
  h1 { margin: 0; height: 54px; background: linear-gradient(#3879d1, #13349a); border: 1px solid #c9c9c9; border-radius: 7px 7px 0 0; color: #fff; font: bold 20px/52px "Open Sans", sans-serif; text-align: center; }
  h1 span { display: inline-block; white-space: nowrap; }
  .grid { padding-top: 9px; border-left: 1px solid #c9c9c9; border-right: 1px solid #c9c9c9; display: flex; flex-direction: column; }
  .row { display: flex; flex: none; border-top: 1px solid #c9c9c9; color: #14389b; }
  .tb { font: bold 16.500px/20px "Open Sans", sans-serif; }
  .lab { width: 622px; padding: 0 0 0 3px; display: flex; align-items: center; flex: none; }
  .r33 .lab { padding-top: 1px; }
  .val { border-left: 1px solid #c9c9c9; flex: 1; padding-left: 5px; display: flex; align-items: center; }
  .r10 { height: 10px; } .r20 { height: 20px; } .r23 { height: 23px; } .r33 { height: 33px; } .r38 { height: 38px; } .r39 { height: 39px; } .r41 { height: 41px; } .r42 { height: 42px; } .r46 { height: 46px; } .r48 { height: 48px; } .r50 { height: 50px; }
  .select { height: 37px; background: #fff; border: 1px solid #8c8c8c; color: #2f2f2f; display: flex; align-items: center; justify-content: space-between; padding: 0 6px 0 11px; }
  .w215 { width: 215px; height: 38px; } .w450 { width: 450px; } .w330 { width: 330px; }
  .input { width: 189px; height: 29px; background: #fff; border: 1px solid #8c8c8c; color: #2f2f2f; font: 17.600px/27px "Liberation Sans", sans-serif; padding-left: 7px; overflow: hidden; white-space: nowrap; margin-top: -1px; }
  .input span { display: inline-block; }
  .spec { letter-spacing: .2px; margin-top: 0; }
  .radio { display: flex; align-items: center; }
  .radio i { width: 18px; height: 18px; border: 1.500px solid #777; border-radius: 50%; background: #fff; margin: 0 1px 4px 3px; display: flex; flex: none; }
  .radio i.on { border-color: #0a78ff; background: radial-gradient(circle, #0075ff 5px, #fff 5.700px); border-width: 2px; }
  .radio b { margin-top: 3px; }
  .g1 { width: 335px; } .g2 { width: 480px; }
  .area { width: 343px; height: 47px; border: 1px solid #8c8c8c; background: #fff; display: flex; align-items: center; justify-content: space-between; padding-left: 6px; color: #2f2f2f; font-size: 16.500px; }
  .areatext { white-space: nowrap; }
  em { color: #f00; font: 15px/20px "Liberation Sans", sans-serif; margin: -2px 0 0 16px; }
  .top { align-items: flex-start; }
  .file { width: 102px; height: 26px; border: 1px solid #777; border-radius: 4px; display: flex; align-items: center; padding-left: 11px; color: #111; font: 15px/20px "Liberation Sans", sans-serif; }
  .nofile { margin: 4px 0 0 6px; color: #b5080d; font: 15px/20px "Liberation Sans", sans-serif; }
  .warn { color: #fb0000; font: 16.500px/20px "Liberation Sans", sans-serif; }
  .grey { color: #666; }
  .terms { padding: 8px 0 0 4px; }
  .check { width: 18px; height: 18px; border-radius: 3px; background: #cfcfcf; position: relative; flex: none; margin: 0 6px 0 1px; }
  .big { width: 20px; height: 20px; margin: 0 5px 0 0; }
  .check::after { content: ''; position: absolute; left: 6px; top: 2px; width: 6px; height: 10px; border: solid #f4f4f4; border-width: 0 2.500px 2.500px 0; transform: rotate(42deg); }
  .terms > .tb { margin-top: 4px; align-self: flex-start; }
  .two { flex-direction: column; padding-top: 5px; }
  .two .tb { line-height: 17px; }
  .line { display: flex; height: 18px; }
  .line .tb { margin-top: 4px; }
  .two > .tb { margin-top: 3px; }
  .scroll { width: 24px; height: 866px; margin-left: 188px; background: #f1f1f1; display: flex; flex-direction: column; align-items: center; padding: 9px 1px 0 2px; flex: none; }
  .thumb { width: 21px; height: 652px; background: #c1c1c1; margin: 18px 0 163px; }
  .idea { position: absolute; left: 0; top: 405px; width: 55px; height: 202px; background: #2450b0; border: 1px solid #fff; border-left: 0; padding: 11px 0 0 5px; display: flex; flex-direction: column; }
  .ideatext { writing-mode: vertical-rl; transform: rotate(180deg); font-size: 19px; line-height: 23px; height: 114px; width: 46px; flex: none; color: #e3eaf8; margin: 0 0 13px -4px; text-align: center; white-space: nowrap; }
  .taskbar { height: 72px; flex: none; background: #eee; border-top: 2px solid #b9b9b9; display: flex; align-items: center; }
  .weather { width: 232px; height: 50px; position: relative; margin-left: 18px; }
  .weather i { position: absolute; left: 0; top: 9px; width: 30px; height: 30px; border-radius: 50%; background: linear-gradient(155deg, #e5bb2d, #f57812 70%); }
  .weather span { position: absolute; left: 14px; top: -2px; width: 24px; height: 24px; border-radius: 50%; background: #c42b1c; color: #fff; text-align: center; font-size: 15px; line-height: 24px; }
  .search { width: 328px; height: 47px; margin: 0 0 1px 21px; background: #fafafa; border: 2px solid #ddd; border-radius: 24px; display: flex; align-items: center; padding: 0 10px 0 16px; flex: none; }
  .search span { font-size: 19px; color: #606060; margin: -1px auto 0 15px; }
  .apps { display: flex; margin-left: 4px; flex: none; }
  .app { width: 66.100px; height: 70px; display: flex; align-items: center; justify-content: center; position: relative; padding-bottom: 2px; }
  .app.open::after { content: ''; position: absolute; bottom: 7px; width: 9px; height: 5px; border-radius: 3px; background: #868686; }
  .focus::before { content: ''; position: absolute; left: 4px; top: 6px; width: 57px; height: 58px; background: #f9f9f9; border: 1px solid #e2e2e2; border-radius: 6px; }
  .focus::after { content: ''; position: absolute; bottom: 7px; width: 23px; height: 5px; border-radius: 3px; background: #0078d4; }
  .focus > :global(svg) { position: relative; }
  .badge { position: absolute; left: 34px; top: 9px; opacity: .85; }
  .mark { font: bold 14px "Open Sans", sans-serif; fill: #fff; }
  .tray { display: flex; align-items: center; margin-left: 34px; padding-bottom: 2px; color: #1b1b1b; font-size: 16.500px; line-height: 24px; }
  .lang { width: 36px; display: flex; flex-direction: column; align-items: center; margin: 0 27px 0 30px; }
  .vol { margin-left: 12px; } .bat { margin-left: 12px; }
  .clock { width: 94px; margin: 0 13px 0 23px; display: flex; flex-direction: column; align-items: flex-end; }
</style>
